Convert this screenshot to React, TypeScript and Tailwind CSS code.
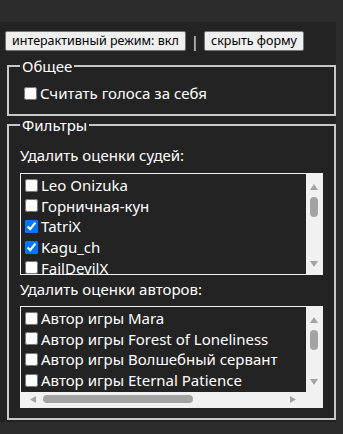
import { useState } from 'react'

const judges = [
  { name: 'Leo Onizuka', checked: false },
  { name: 'Горничная-кун', checked: false },
  { name: 'TatriX', checked: true },
  { name: 'Kagu_ch', checked: true },
  { name: 'FailDevilX', checked: false },
]

const authors = [
  'Автор игры Mara',
  'Автор игры Forest of Loneliness',
  'Автор игры Волшебный сервант',
  'Автор игры Eternal Patience',
]

// fake classic scrollbar, vertical
const VScroll = ({ thumbTop, bottom }: { thumbTop: number; bottom: number }) => (
  <div className="absolute top-0 right-0 w-[16px] bg-[#f1f1f1]" style={{ bottom }}>
    <svg width="16" height="100%" className="absolute inset-0 h-full">
      <polygon points="4,16 12,16 8,10" fill="#a3a3a3" />
    </svg>
    <div className="absolute left-[4px] w-[8px] h-[20px] rounded-full bg-[#a3a3a3]" style={{ top: thumbTop }} />
    <svg width="16" height="8" className="absolute bottom-[6px] left-0">
      <polygon points="4,1 12,1 8,7" fill="#a3a3a3" />
    </svg>
  </div>
)

const App = () => {
  const [interactive, setInteractive] = useState(true)
  const [selfVotes, setSelfVotes] = useState(false)

  return (
    <div className="h-screen overflow-hidden bg-[#2c2c2c] pt-[22px] font-['Noto_Sans',sans-serif] text-[15px] text-white">
      <div className="w-[336px] h-[400px] bg-[#232323] pt-[9px] pl-[5px]">
        <div className="flex items-center">
          <button
            onClick={() => setInteractive(!interactive)}
            className="h-[20px] px-[6px] border border-[#767676] rounded-[2px] bg-[#efefef] text-black text-[12.5px] leading-none"
          >
            интерактивный режим: {interactive ? 'вкл' : 'выкл'}
          </button>
          <span className="mx-[5px] text-[15px] leading-none text-[#e8e8e8]">|</span>
          <button className="h-[20px] px-[6px] border border-[#767676] rounded-[2px] bg-[#efefef] text-black text-[12.5px] leading-none">
            скрыть форму
          </button>
        </div>

        <fieldset className="ml-[2px] mt-[5px] w-[329px] border-2 border-[#c8c8c8] px-[11px] pb-[10px]">
          <legend className="px-[2px] leading-[20px]">Общее</legend>
          <label className="flex items-center h-[21px] mt-[7px]">
            <input
              type="checkbox"
              checked={selfVotes}
              onChange={() => setSelfVotes(!selfVotes)}
              className="m-0 mr-[3px] ml-[4px] w-[13px] h-[13px]"
            />
            Считать голоса за себя
          </label>
        </fieldset>

        <fieldset className="ml-[2px] -mt-[1px] w-[329px] border-2 border-[#c8c8c8] px-[11px] pb-[10px]">
          <legend className="px-[2px] leading-[20px]">Фильтры</legend>
          <div className="mt-[10px] leading-[20px]">Удалить оценки судей:</div>
          <div className="relative mt-[8px] h-[102px] border border-[#f0f0f0] overflow-hidden">
            <div className="pt-[1px]">
              {judges.map((j) => (
                <label key={j.name} className="flex items-center h-[20.67px] whitespace-nowrap">
                  <input type="checkbox" defaultChecked={j.checked} className="m-0 mr-[3px] ml-[4px] w-[13px] h-[13px]" />
                  {j.name}
                </label>
              ))}
            </div>
            <VScroll thumbTop={23} bottom={0} />
          </div>

          <div className="mt-[4px] leading-[20px]">Удалить оценки авторов:</div>
          <div className="relative mt-[7px] h-[102px] border border-[#f0f0f0] overflow-hidden">
            <div className="pt-[1px]">
              {authors.map((a) => (
                <label key={a} className="flex items-center h-[20.67px] whitespace-nowrap">
                  <input type="checkbox" className="m-0 mr-[3px] ml-[4px] w-[13px] h-[13px]" />
                  {a}
                </label>
              ))}
            </div>
            <VScroll thumbTop={23} bottom={15} />
            <div className="absolute left-0 right-0 bottom-0 h-[15px] bg-[#f1f1f1]">
              <svg width="300" height="15" className="absolute inset-0">
                <polygon points="15,4 15,11 9,7.5" fill="#a3a3a3" />
                <polygon points="269,4 269,11 275,7.5" fill="#a3a3a3" />
              </svg>
              <div className="absolute top-[3px] left-[22px] w-[150px] h-[8px] rounded-full bg-[#a3a3a3]" />
            </div>
          </div>
        </fieldset>
      </div>
    </div>
  )
}
export default App
